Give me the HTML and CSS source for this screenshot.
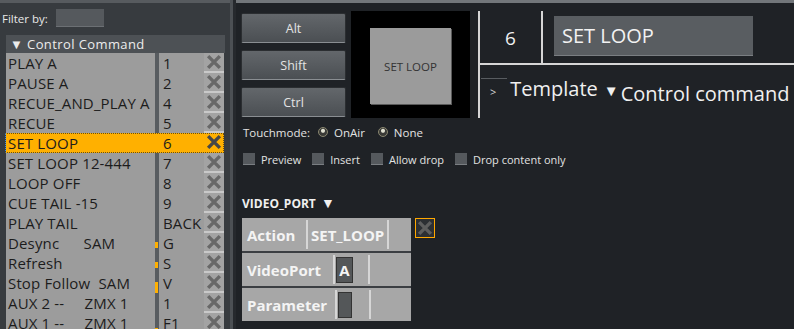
FILE: index.html
```html
<!DOCTYPE html>
<html lang="en">
<head>
    <meta charset="UTF-8">
    <title>Control Command</title>
    <link rel="stylesheet" href="styles.css">
</head>
<body>
    <div class="left-panel">
        <div class="filter-row">
            <span>Filter by:</span>
            <div class="filter-input"></div>
        </div>
        <div class="group-header">&#9660; Control Command</div>
        <div class="cmd-list">
            <div class="cmd-row"><div class="cmd-name">PLAY A</div><div class="cmd-sep"></div><div class="cmd-key">1</div><div class="cmd-del"><svg viewBox="0 0 20 20"><path d="M3.5 3.5L16.5 16.5M16.5 3.5L3.5 16.5"/></svg></div></div>
            <div class="cmd-row"><div class="cmd-name">PAUSE A</div><div class="cmd-sep"></div><div class="cmd-key">2</div><div class="cmd-del"><svg viewBox="0 0 20 20"><path d="M3.5 3.5L16.5 16.5M16.5 3.5L3.5 16.5"/></svg></div></div>
            <div class="cmd-row"><div class="cmd-name">RECUE_AND_PLAY A</div><div class="cmd-sep"></div><div class="cmd-key">4</div><div class="cmd-del"><svg viewBox="0 0 20 20"><path d="M3.5 3.5L16.5 16.5M16.5 3.5L3.5 16.5"/></svg></div></div>
            <div class="cmd-row"><div class="cmd-name">RECUE</div><div class="cmd-sep"></div><div class="cmd-key">5</div><div class="cmd-del"><svg viewBox="0 0 20 20"><path d="M3.5 3.5L16.5 16.5M16.5 3.5L3.5 16.5"/></svg></div></div>
            <div class="cmd-row selected"><div class="cmd-name">SET LOOP</div><div class="cmd-sep"></div><div class="cmd-key">6</div><div class="cmd-del"><svg viewBox="0 0 20 20"><path d="M3.5 3.5L16.5 16.5M16.5 3.5L3.5 16.5"/></svg></div></div>
            <div class="cmd-row"><div class="cmd-name">SET LOOP 12-444</div><div class="cmd-sep"></div><div class="cmd-key">7</div><div class="cmd-del"><svg viewBox="0 0 20 20"><path d="M3.5 3.5L16.5 16.5M16.5 3.5L3.5 16.5"/></svg></div></div>
            <div class="cmd-row"><div class="cmd-name">LOOP OFF</div><div class="cmd-sep"></div><div class="cmd-key">8</div><div class="cmd-del"><svg viewBox="0 0 20 20"><path d="M3.5 3.5L16.5 16.5M16.5 3.5L3.5 16.5"/></svg></div></div>
            <div class="cmd-row"><div class="cmd-name">CUE TAIL -15</div><div class="cmd-sep"></div><div class="cmd-key">9</div><div class="cmd-del"><svg viewBox="0 0 20 20"><path d="M3.5 3.5L16.5 16.5M16.5 3.5L3.5 16.5"/></svg></div></div>
            <div class="cmd-row"><div class="cmd-name">PLAY TAIL</div><div class="cmd-sep"></div><div class="cmd-key">BACK</div><div class="cmd-del"><svg viewBox="0 0 20 20"><path d="M3.5 3.5L16.5 16.5M16.5 3.5L3.5 16.5"/></svg></div></div>
            <div class="cmd-row"><div class="cmd-name">Desync&nbsp;&nbsp;&nbsp;&nbsp;&nbsp;&nbsp;SAM</div><div class="cmd-sep"><i class="mark" style="top: 9px; height: 6px;"></i></div><div class="cmd-key">G</div><div class="cmd-del"><svg viewBox="0 0 20 20"><path d="M3.5 3.5L16.5 16.5M16.5 3.5L3.5 16.5"/></svg></div></div>
            <div class="cmd-row"><div class="cmd-name">Refresh</div><div class="cmd-sep"><i class="mark" style="top: 9px; height: 6px;"></i></div><div class="cmd-key">S</div><div class="cmd-del"><svg viewBox="0 0 20 20"><path d="M3.5 3.5L16.5 16.5M16.5 3.5L3.5 16.5"/></svg></div></div>
            <div class="cmd-row"><div class="cmd-name">Stop Follow&nbsp;&nbsp;SAM</div><div class="cmd-sep"><i class="mark" style="top: 9px; height: 12px;"></i></div><div class="cmd-key">V</div><div class="cmd-del"><svg viewBox="0 0 20 20"><path d="M3.5 3.5L16.5 16.5M16.5 3.5L3.5 16.5"/></svg></div></div>
            <div class="cmd-row"><div class="cmd-name">AUX 2 --&nbsp;&nbsp;&nbsp;&nbsp;&nbsp;ZMX 1</div><div class="cmd-sep"></div><div class="cmd-key">1</div><div class="cmd-del"><svg viewBox="0 0 20 20"><path d="M3.5 3.5L16.5 16.5M16.5 3.5L3.5 16.5"/></svg></div></div>
            <div class="cmd-row"><div class="cmd-name">AUX 1 --&nbsp;&nbsp;&nbsp;&nbsp;&nbsp;ZMX 1</div><div class="cmd-sep"><i class="mark" style="top: 15px; height: 7px;"></i></div><div class="cmd-key">F1</div><div class="cmd-del"><svg viewBox="0 0 20 20"><path d="M3.5 3.5L16.5 16.5M16.5 3.5L3.5 16.5"/></svg></div></div>
        </div>
    </div>
    <div class="splitter"></div>

    <div class="right-panel">
        <div class="top-block">
            <div class="modifier-keys">
                <button class="mod-key">Alt</button>
                <button class="mod-key">Shift</button>
                <button class="mod-key">Ctrl</button>
            </div>
            <div class="preview">
                <div class="preview-button">SET LOOP</div>
            </div>
            <div class="info">
                <div class="info-top">
                    <div class="info-num">6</div>
                    <div class="info-name">SET LOOP</div>
                </div>
                <div class="info-bottom">
                    <div class="short-line"></div>
                    <div class="template-row">
                        <span class="chevron">&gt;</span>
                        <span class="template">Template</span>
                        <span class="tri">&#9660;</span>
                        <span class="command-type">Control command</span>
                    </div>
                </div>
            </div>
        </div>

        <div class="touch-row">
            <span>Touchmode:</span>
            <span class="radio"></span><span>OnAir</span>
            <span class="radio second"></span><span>None</span>
        </div>

        <div class="check-row">
            <span class="check"></span><span>Preview</span>
            <span class="check"></span><span>Insert</span>
            <span class="check"></span><span>Allow drop</span>
            <span class="check"></span><span>Drop content only</span>
        </div>

        <div class="section-title">VIDEO_PORT <span class="section-tri">&#9660;</span></div>

        <div class="param-area">
            <div class="param-table">
                <div class="param-row">
                    <div class="param-label w-action">Action</div>
                    <div class="vline"></div>
                    <div class="param-value">SET_LOOP</div>
                    <div class="vline"></div>
                </div>
                <div class="param-row">
                    <div class="param-label w-port">VideoPort</div>
                    <div class="vline"></div>
                    <div class="value-box">A</div>
                    <div class="vline gap-port"></div>
                </div>
                <div class="param-row">
                    <div class="param-label w-param">Parameter</div>
                    <div class="vline"></div>
                    <div class="value-box empty"></div>
                    <div class="vline gap-param"></div>
                </div>
            </div>
            <div class="param-del"><svg viewBox="0 0 20 20"><path d="M3.5 3.5L16.5 16.5M16.5 3.5L3.5 16.5"/></svg></div>
        </div>
    </div>
</body>
</html>
```

FILE: styles.css
```css
body {
    margin: 0;
    width: 794px;
    height: 329px;
    overflow: hidden;
    display: flex;
    background-color: #1f2226;
    font-family: 'Open Sans', sans-serif;
    color: #e6e6e6;
}

/* left list panel */
.left-panel {
    width: 230px;
    flex-shrink: 0;
    background-color: #373b3f;
    border-top: 3px solid #575b5f;
    box-sizing: border-box;
}

.splitter {
    width: 6px;
    flex-shrink: 0;
    background: linear-gradient(to right, #4c5054 0 3px, #26292d 3px 6px);
}

.filter-row {
    display: flex;
    align-items: center;
    height: 26px;
    padding: 2px 0 0 2px;
    font-size: 11.5px;
    color: #e8e8e8;
}

.filter-input {
    width: 48px;
    height: 17px;
    margin-left: 8px;
    background-color: #55595d;
    border-bottom: 1px solid #6c7074;
}

.group-header {
    margin: 4px 0 0 6px;
    width: 219px;
    height: 18px;
    line-height: 18px;
    background-color: #4d5155;
    font-size: 13px;
    letter-spacing: 0.4px;
    padding-left: 4px;
    box-sizing: border-box;
    color: #ececec;
}

.cmd-list {
    margin: 0 0 0 6px;
    width: 218px;
}

.cmd-row {
    display: flex;
    height: 20px;
    font-size: 15px;
    letter-spacing: 0.15px;
    line-height: 21px;
    color: #1c1c1c;
    position: relative;
}

.cmd-name {
    width: 147px;
    padding-left: 2px;
    background-color: #9c9c9c;
    white-space: nowrap;
    overflow: hidden;
}

.cmd-sep {
    width: 4px;
    background-color: #585c60;
    position: relative;
}

.mark {
    position: absolute;
    left: 0;
    width: 3px;
    background-color: #ffb000;
}

.cmd-key {
    width: 41px;
    padding-left: 4px;
    background-color: #9c9c9c;
    white-space: nowrap;
    overflow: hidden;
}

.cmd-del {
    width: 20px;
    height: 20px;
    background-color: #a3a3a3;
    border-bottom: 2px solid #c9c9c9;
    box-sizing: border-box;
}

.cmd-del svg {
    display: block;
    width: 20px;
    height: 18px;
}

.cmd-del path,
.param-del path {
    stroke: #686868;
    stroke-width: 3.8;
    fill: none;
}

.cmd-row.selected .cmd-name,
.cmd-row.selected .cmd-sep,
.cmd-row.selected .cmd-key,
.cmd-row.selected .cmd-del {
    background-color: #ffb000;
}

.cmd-row.selected .cmd-del {
    border-bottom-color: #ffb000;
}

.cmd-row.selected path {
    stroke: #474747;
}

.cmd-row.selected::after {
    content: '';
    position: absolute;
    left: -1px;
    top: 0;
    right: 0;
    bottom: 0;
    border: 1px dotted #6b5010;
    border-left-color: #3c8ce0;
}

/* right editor panel */
.right-panel {
    flex: 1;
    min-width: 0;
    border-top: 3px solid #72767a;
    padding-left: 5px;
    box-sizing: border-box;
    font-size: 11.5px;
}

.top-block {
    display: flex;
    margin-top: 8px;
    height: 107px;
}

.modifier-keys {
    display: flex;
    flex-direction: column;
    gap: 7px;
    padding-top: 2px;
}

.mod-key {
    width: 105px;
    height: 30px;
    background: linear-gradient(to bottom, #63676b, #4b4f53);
    border: 1px solid #2b2e31;
    border-bottom-color: #8a8e92;
    border-radius: 2px;
    color: #e4e4e4;
    font-family: 'Open Sans', sans-serif;
    font-size: 12.5px;
    padding: 0;
}

.preview {
    width: 119px;
    margin-left: 5px;
    background-color: #000;
    display: flex;
    align-items: center;
    justify-content: center;
    padding-top: 3px;
    box-sizing: border-box;
}

.preview-button {
    width: 81px;
    height: 76px;
    background-color: #9b9b9b;
    box-shadow: 1px 1px 0 #5a5a5a;
    color: #333;
    font-size: 11.5px;
    display: flex;
    align-items: center;
    justify-content: center;
}

.info {
    flex: 1;
    min-width: 0;
    margin-left: 8px;
    border-left: 2px solid #d6d6d6;
    display: flex;
    flex-direction: column;
}

.info-top {
    display: flex;
    height: 52px;
    border-bottom: 2px solid #d6d6d6;
}

.info-num {
    width: 61px;
    border-right: 2px solid #d6d6d6;
    font-size: 19px;
    color: #f0f0f0;
    text-align: center;
    line-height: 54px;
}

.info-name {
    margin: 5px 0 0 11px;
    width: 199px;
    height: 40px;
    padding-left: 8px;
    box-sizing: border-box;
    background-color: #595d61;
    border-bottom: 1px solid #7a7e82;
    font-size: 20px;
    line-height: 40px;
    color: #f2f2f2;
}

.short-line {
    width: 26px;
    height: 1px;
    margin: 13px 0 0 1px;
    background-color: #585c60;
}

.template-row {
    display: flex;
    align-items: baseline;
    white-space: nowrap;
    margin-top: -4px;
}

.chevron {
    font-size: 11px;
    margin-left: 10px;
    color: #d8d8d8;
}

.template {
    font-size: 20px;
    margin-left: 14px;
    color: #f0f0f0;
}

.tri {
    font-size: 15px;
    margin-left: 6px;
    color: #f0f0f0;
}

.command-type {
    font-size: 20px;
    margin-left: 2px;
    position: relative;
    top: 5px;
    color: #f0f0f0;
}

.touch-row,
.check-row {
    display: flex;
    align-items: center;
    padding-left: 2px;
    color: #e2e2e2;
}

.touch-row {
    margin-top: 7px;
    height: 14px;
}

.radio {
    width: 10px;
    height: 10px;
    border-radius: 50%;
    background: radial-gradient(circle at 50% 35%, #e0e0d0 0 1.5px, #3a3a36 2.5px);
    border: 1px solid #8a8770;
    box-sizing: border-box;
    margin: 0 6px 0 8px;
}

.radio.second {
    margin-left: 13px;
}

.check-row {
    margin-top: 13px;
    height: 14px;
    font-size: 11px;
}

.check {
    width: 12px;
    height: 12px;
    background-color: #55595d;
    border-bottom: 1px solid #7a7e82;
    box-sizing: border-box;
    margin: 0 6px 0 0;
}

.check-row span:nth-child(3),
.check-row span:nth-child(5),
.check-row span:nth-child(7) {
    margin-left: 11px;
}

.section-title {
    margin-top: 30px;
    padding-left: 1px;
    font-weight: bold;
    font-size: 12px;
    color: #f0f0f0;
    height: 14px;
    line-height: 14px;
}

.section-tri {
    font-size: 14px;
    margin-left: 2px;
}

.param-area {
    display: flex;
    align-items: flex-start;
    margin-top: 8px;
}

.param-table {
    width: 169px;
    margin-left: 1px;
    background-color: #a7a7a7;
}

.param-row {
    display: flex;
    align-items: center;
    height: 33px;
    border-bottom: 2px solid #3b3e42;
    font-weight: bold;
    font-size: 15px;
    color: #f4f4f4;
}

.param-row:last-child {
    border-bottom: none;
}

.param-label {
    padding-left: 5px;
    box-sizing: border-box;
    white-space: nowrap;
}

.w-action { width: 64px; }
.w-port { width: 91px; }
.w-param { width: 93px; }

.vline {
    width: 2px;
    height: 29px;
    background-color: #d6d6d6;
}

.param-value {
    width: 79px;
    padding-left: 3px;
    box-sizing: border-box;
    white-space: nowrap;
}

.value-box {
    width: 17px;
    height: 26px;
    margin-left: 1px;
    background-color: #545759;
    border: 1px solid #333;
    box-sizing: border-box;
    text-align: center;
    line-height: 24px;
    font-size: 15px;
}

.value-box.empty {
    width: 14px;
    margin-left: 1px;
}

.gap-port { margin-left: 15px; }
.gap-param { margin-left: 17px; }

.param-del {
    width: 18px;
    height: 18px;
    margin-left: 4px;
    background-color: #2c2f33;
    border: 1px solid #ffa800;
}

.param-del svg {
    display: block;
    width: 18px;
    height: 18px;
}

.param-del path {
    stroke: #5e5e5e;
}
```
